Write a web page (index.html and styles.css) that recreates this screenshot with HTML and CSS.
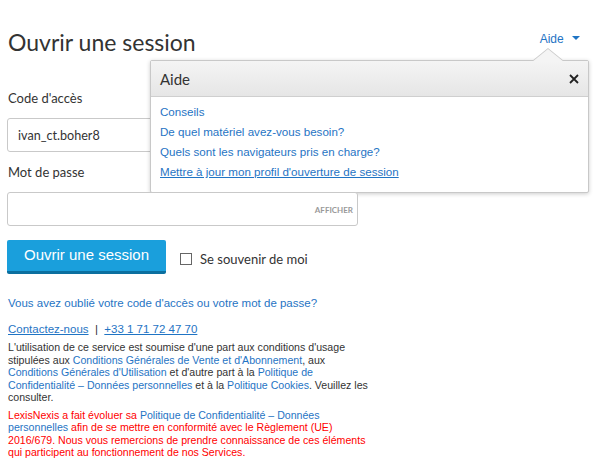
FILE: index.html
```html
<!DOCTYPE html>
<html lang="fr">
<head>
 <meta charset="UTF-8">
 <meta name="viewport" content="width=device-width, initial-scale=1.0">
 <title>Ouvrir une session</title>
 <link rel="stylesheet" href="styles.css">
</head>
<body>
 <div class="page">
  <div class="top">
   <h1>Ouvrir une session</h1>
   <a href="#" class="help">Aide <span class="caret"></span></a>
  </div>

  <div class="popover">
   <div class="popover-head">
    <span>Aide</span>
    <svg class="close" width="10" height="10" viewBox="0 0 10 10"><path d="M1 1L9 9M9 1L1 9" stroke="#222" stroke-width="1.8"/></svg>
   </div>
   <ul class="popover-links">
    <li><a href="#">Conseils</a></li>
    <li><a href="#">De quel matériel avez-vous besoin?</a></li>
    <li><a href="#">Quels sont les navigateurs pris en charge?</a></li>
    <li><a href="#" class="underline">Mettre à jour mon profil d'ouverture de session</a></li>
   </ul>
  </div>

  <form class="login">
   <div class="field">
    <label for="user">Code d'accès</label>
    <input type="text" id="user" value="ivan_ct.boher8">
   </div>
   <div class="field">
    <label for="pass">Mot de passe</label>
    <div class="pass">
     <input type="password" id="pass">
     <span class="show">AFFICHER</span>
    </div>
   </div>
   <div class="actions">
    <button type="button">Ouvrir une session</button>
    <label class="remember"><span class="box"></span>Se souvenir de moi</label>
   </div>
  </form>

  <p class="forgot"><a href="#">Vous avez oublié votre code d'accès ou votre mot de passe?</a></p>
  <p class="contact"><a href="#">Contactez-nous</a> &nbsp;|&nbsp; <a href="#">+33 1 71 72 47 70</a></p>
  <p class="legal">L'utilisation de ce service est soumise d'une part aux conditions d'usage stipulées aux <a href="#">Conditions Générales de Vente et d'Abonnement</a>, aux<br><a href="#">Conditions Générales d'Utilisation</a> et d'autre part à la <a href="#">Politique de Confidentialité – Données personnelles</a> et à la <a href="#">Politique Cookies</a>. Veuillez les consulter.</p>
  <p class="legal notice">LexisNexis a fait évoluer sa <a href="#">Politique de Confidentialité – Données personnelles</a> afin de se mettre en conformité avec le Règlement (UE) 2016/679. Nous vous remercions de prendre connaissance de ces éléments qui participent au fonctionnement de nos Services.</p>
 </div>
</body>
</html>
```

FILE: styles.css
```css
body {
    margin: 0;
    background: #fff;
    color: #333;
    font-family: Lato, "Liberation Sans", sans-serif;
}

a {
    color: #1f74c4;
    text-decoration: none;
}

.page {
    position: relative;
    padding: 28px 7px 0 7px;
}

.top {
    display: flex;
    justify-content: space-between;
    align-items: flex-start;
}

h1 {
    margin: 0 0 0 1px;
    font-size: 23px;
    font-weight: normal;
    line-height: 28px;
}

.help {
    margin: 4px 12px 0 0;
    font-family: "Liberation Sans", Arial, sans-serif;
    font-size: 12px;
    line-height: 15px;
}

.caret {
    display: inline-block;
    margin-left: 5px;
    vertical-align: 3px;
    border-top: 4px solid #1f74c4;
    border-left: 4px solid transparent;
    border-right: 4px solid transparent;
}

/* aide popup */
.popover {
    position: absolute;
    left: 150px;
    top: 60px;
    width: 437px;
    background: #fff;
    border: 1px solid #c8c8c8;
    border-radius: 2px;
    box-shadow: 0 1px 4px rgba(0, 0, 0, 0.2);
}

.popover::before,
.popover::after {
    content: "";
    position: absolute;
    left: 381px;
    border-left: 16px solid transparent;
    border-right: 16px solid transparent;
}

.popover::before {
    top: -13px;
    border-bottom: 13px solid #c8c8c8;
}

.popover::after {
    top: -12px;
    border-bottom: 13px solid #f4f4f4;
}

.popover-head {
    display: flex;
    justify-content: space-between;
    align-items: center;
    height: 35px;
    padding: 0 9px 0 9px;
    background: linear-gradient(#f4f4f4, #e6e6e6);
    border-bottom: 1px solid #cfcfcf;
    font-size: 15px;
}

.popover-links {
    list-style: none;
    margin: 0;
    padding: 5px 9px 10px 9px;
    font-family: "Liberation Sans", Arial, sans-serif;
    font-size: 11.6px;
    line-height: 20px;
}

.underline {
    text-decoration: underline;
}

/* formulaire */
.login {
    margin-top: 32px;
}

.field + .field {
    margin-top: 10px;
}

.field label {
    display: block;
    margin: 0 0 10px 1px;
    font-size: 13px;
    line-height: 20px;
}

.field input {
    box-sizing: border-box;
    width: 351px;
    height: 34px;
    padding: 0 10px;
    border: 1px solid #c9c9c9;
    border-radius: 3px;
    font-family: Lato, sans-serif;
    font-size: 12.6px;
    color: #333;
}

.pass {
    position: relative;
    width: 351px;
}

.show {
    position: absolute;
    right: 5px;
    top: 13px;
    font-size: 8px;
    font-weight: bold;
    color: #999;
}

.actions {
    display: flex;
    align-items: center;
    margin-top: 14px;
}

button {
    height: 34px;
    padding: 0 17px 2px 17px;
    background-color: #1a9fdc;
    border: none;
    border-bottom: 3px solid #0b6f9f;
    border-radius: 2px;
    color: #fff;
    font-family: "Liberation Sans", Arial, sans-serif;
    font-size: 15px;
    cursor: pointer;
}

.remember {
    display: flex;
    align-items: center;
    margin: 4px 0 0 14px;
    font-size: 13px;
}

.box {
    box-sizing: border-box;
    width: 12px;
    height: 12px;
    margin-right: 8px;
    border: 1px solid #666;
    background: #fff;
}

/* bas de page */
.forgot,
.contact {
    margin: 22px 0 0 1px;
    font-family: "Liberation Sans", Arial, sans-serif;
    font-size: 11.5px;
    line-height: 15px;
}

.contact {
    margin-top: 11px;
}

.contact a {
    text-decoration: underline;
}

.legal {
    width: 368px;
    margin: 4px 0 0 1px;
    font-family: "Liberation Sans", Arial, sans-serif;
    font-size: 10.6px;
    line-height: 12.5px;
}

.notice {
    margin-top: 5px;
    color: #f00;
}
```
